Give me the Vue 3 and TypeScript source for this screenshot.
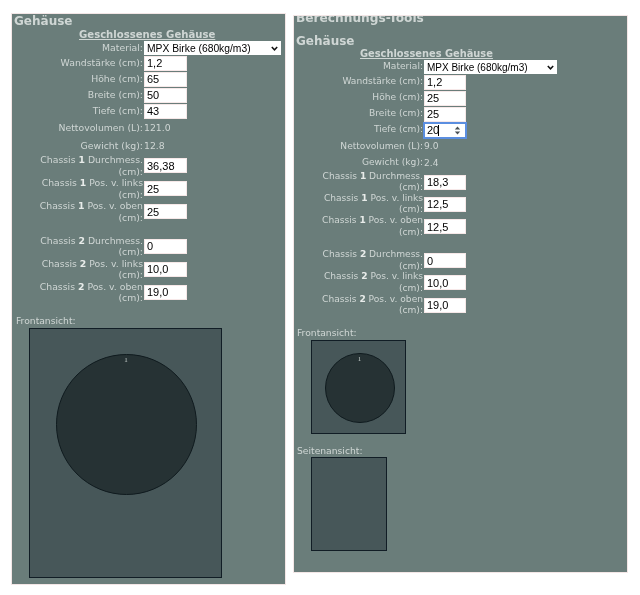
<script setup lang="ts">
interface Circle { x: number; y: number; r: number }
interface View { label: string; width: number; height: number; circle?: Circle }
interface Panel {
  id: string;
  tool?: string;
  values: string[];
  info: string[];
  chassis1: string[];
  chassis2: string[];
  views: View[];
  focusLast?: boolean;
}

const panels: Panel[] = [
  {
    id: 'left',
    values: ['1,2', '65', '50', '43'],
    info: ['121.0', '12.8'],
    chassis1: ['36,38', '25', '25'],
    chassis2: ['0', '10,0', '19,0'],
    views: [{ label: 'Frontansicht:', width: 193, height: 250, circle: { x: 96, y: 96, r: 70.5 } }],
  },
  {
    id: 'right',
    tool: 'Berechnungs-Tools',
    values: ['1,2', '25', '25', '20'],
    info: ['9.0', '2.4'],
    chassis1: ['18,3', '12,5', '12,5'],
    chassis2: ['0', '10,0', '19,0'],
    views: [
      { label: 'Frontansicht:', width: 95, height: 94, circle: { x: 47.5, y: 47, r: 35 } },
      { label: 'Seitenansicht:', width: 76, height: 94 },
    ],
    focusLast: true,
  },
];

const sizeLabels = ['Wandstärke (cm):', 'Höhe (cm):', 'Breite (cm):', 'Tiefe (cm):'];
const infoLabels = ['Nettovolumen (L):', 'Gewicht (kg):'];
const chassisLabels = ['Durchmess. (cm):', 'Pos. v. links (cm):', 'Pos. v. oben (cm):'];
</script>

<template>
  <div class="page">
    <section v-for="panel in panels" :key="panel.id" class="panel" :class="`panel-${panel.id}`">
      <h2 v-if="panel.tool" class="tool-title">{{ panel.tool }}</h2>
      <h3 class="title">Gehäuse</h3>
      <h4 class="subtitle">Geschlossenes Gehäuse</h4>

      <div class="row row-select">
        <label class="label">Material:</label>
        <div class="select-wrap">
          <select class="select">
            <option>MPX Birke (680kg/m3)</option>
          </select>
          <svg class="chevron" width="7" height="5" viewBox="0 0 7 5">
            <path d="M0.8 1 3.5 3.8 6.2 1" fill="none" stroke="#111" stroke-width="1.5" />
          </svg>
        </div>
      </div>

      <div v-for="(name, i) in sizeLabels" :key="name" class="row">
        <label class="label">{{ name }}</label>
        <div
          class="field"
          :class="{ 'field-focus': panel.focusLast && i === sizeLabels.length - 1 }"
        >
          <input class="input" type="text" :value="panel.values[i]" />
          <template v-if="panel.focusLast && i === sizeLabels.length - 1">
            <span class="caret"></span>
            <svg class="spin" width="7" height="9" viewBox="0 0 7 9">
              <path d="M3.5 0.5 6.2 3.6H0.8ZM3.5 8.5 0.8 5.4H6.2Z" fill="#4a5054" />
            </svg>
          </template>
        </div>
      </div>

      <div v-for="(name, i) in infoLabels" :key="name" class="row row-info">
        <label class="label">{{ name }}</label>
        <span class="value">{{ panel.info[i] }}</span>
      </div>

      <div v-for="(name, i) in chassisLabels" :key="name" class="row row-tall">
        <label class="label">Chassis <b>1</b> {{ name }}</label>
        <div class="field"><input class="input" type="text" :value="panel.chassis1[i]" /></div>
      </div>

      <div class="chassis-gap"></div>

      <div v-for="(name, i) in chassisLabels" :key="name" class="row row-tall">
        <label class="label">Chassis <b>2</b> {{ name }}</label>
        <div class="field"><input class="input" type="text" :value="panel.chassis2[i]" /></div>
      </div>

      <div v-for="view in panel.views" :key="view.label" class="view">
        <p class="view-label">{{ view.label }}</p>
        <div class="box" :style="{ width: `${view.width}px`, height: `${view.height}px` }">
          <div
            v-if="view.circle"
            class="circle"
            :style="{
              left: `${view.circle.x - view.circle.r}px`,
              top: `${view.circle.y - view.circle.r}px`,
              width: `${view.circle.r * 2}px`,
              height: `${view.circle.r * 2}px`,
            }"
          >1</div>
        </div>
      </div>
    </section>
  </div>
</template>

<style>
html,
body {
  background: #fff;
}
</style>

<style scoped>
.page {
  display: flex;
  align-items: flex-start;
  gap: 9px;
  width: 640px;
  height: 595px;
  padding-left: 12px;
  box-sizing: border-box;
  overflow: hidden;
  font-family: "DejaVu Sans", Verdana, sans-serif;
  color: #cfd6d4;
  filter: blur(0.4px);
}

.panel {
  box-sizing: border-box;
  overflow: hidden;
  background: #6a7d7a;
  box-shadow: 0 0 0 1px #f3e6e6;
}

.panel-left {
  --fs: 9.3px;
  --sub: 10.1px;
  --info: 17.5px;
  --tall: 23px;
  --input: 43px;
  --label: 104px;
  --select: 137px;
  --select-fs: 10.3px;
  width: 273px;
  height: 570px;
  margin-top: 14px;
}

.panel-right {
  --fs: 9.1px;
  --sub: 9.85px;
  --info: 16.5px;
  --tall: 22.3px;
  --input: 42px;
  --label: 102px;
  --select: 133px;
  --select-fs: 10px;
  width: 333px;
  height: 556px;
  margin-top: 16px;
}

.tool-title {
  margin: -5px 0 9px 2px;
  height: 14px;
  font-size: 12.2px;
  line-height: 14px;
  font-weight: 700;
}

.title {
  margin: 0 0 0 2px;
  height: 14px;
  font-size: 12px;
  line-height: 14px;
  font-weight: 700;
}

.panel-right .title {
  height: 13px;
}

.subtitle {
  margin: 0;
  padding-left: 67px;
  height: 13px;
  font-size: var(--sub);
  line-height: 13px;
  font-weight: 700;
  text-decoration: underline;
}

.panel-right .subtitle {
  padding-left: 66px;
}

.row {
  display: flex;
  align-items: center;
  gap: 1px;
  height: 16px;
  padding-left: 27px;
  font-size: var(--fs);
}

.row-select {
  height: 14px;
}

.row-info {
  height: var(--info);
}

.row-tall {
  height: var(--tall);
}

.label {
  flex: none;
  box-sizing: border-box;
  width: var(--label);
  text-align: right;
  line-height: 11.5px;
}

.label b {
  color: #e8ecea;
}

.value {
  white-space: nowrap;
}

.select-wrap {
  position: relative;
  flex: none;
  width: var(--select);
  height: 14px;
}

.select {
  display: block;
  box-sizing: border-box;
  width: 100%;
  height: 100%;
  padding: 0 0 0 3px;
  border: 0;
  border-radius: 0;
  appearance: none;
  background: #fff;
  color: #000;
  font-family: "Liberation Sans", Arial, sans-serif;
  font-size: var(--select-fs);
}

.chevron {
  position: absolute;
  right: 3px;
  top: 5px;
}

.field {
  position: relative;
  flex: none;
  width: var(--input);
  height: 15px;
}

.input {
  display: block;
  box-sizing: border-box;
  width: 100%;
  height: 100%;
  padding: 0 2px;
  border: 1px solid #f6e8e8;
  border-radius: 0;
  outline: none;
  background: #fff;
  color: #000;
  font-family: "Liberation Sans", Arial, sans-serif;
  font-size: 11px;
}

.field-focus .input {
  border-color: #5b8ee0;
  box-shadow: 0 0 0 1px #5b8ee0;
}

.caret {
  position: absolute;
  left: 14px;
  top: 2px;
  width: 1px;
  height: 11px;
  background: #000;
}

.spin {
  position: absolute;
  right: 5px;
  top: 3px;
}

.chassis-gap {
  height: 11.5px;
}

.view {
  padding-top: 11px;
}

.view-label {
  margin: 0 0 0 4px;
  height: 13px;
  font-size: 9.2px;
  line-height: 11px;
}

.panel-right .view-label {
  height: 12.5px;
  margin-left: 3px;
}

.box {
  position: relative;
  box-sizing: border-box;
  margin-left: 17px;
  border: 1px solid #111d25;
  background: #475759;
}

.circle {
  position: absolute;
  box-sizing: border-box;
  border: 1px solid #0f1a1e;
  border-radius: 50%;
  background: #263234;
  color: #c9d0ce;
  font-family: "Liberation Serif", serif;
  font-size: 7px;
  line-height: 8px;
  padding-top: 1px;
  text-align: center;
}
</style>
